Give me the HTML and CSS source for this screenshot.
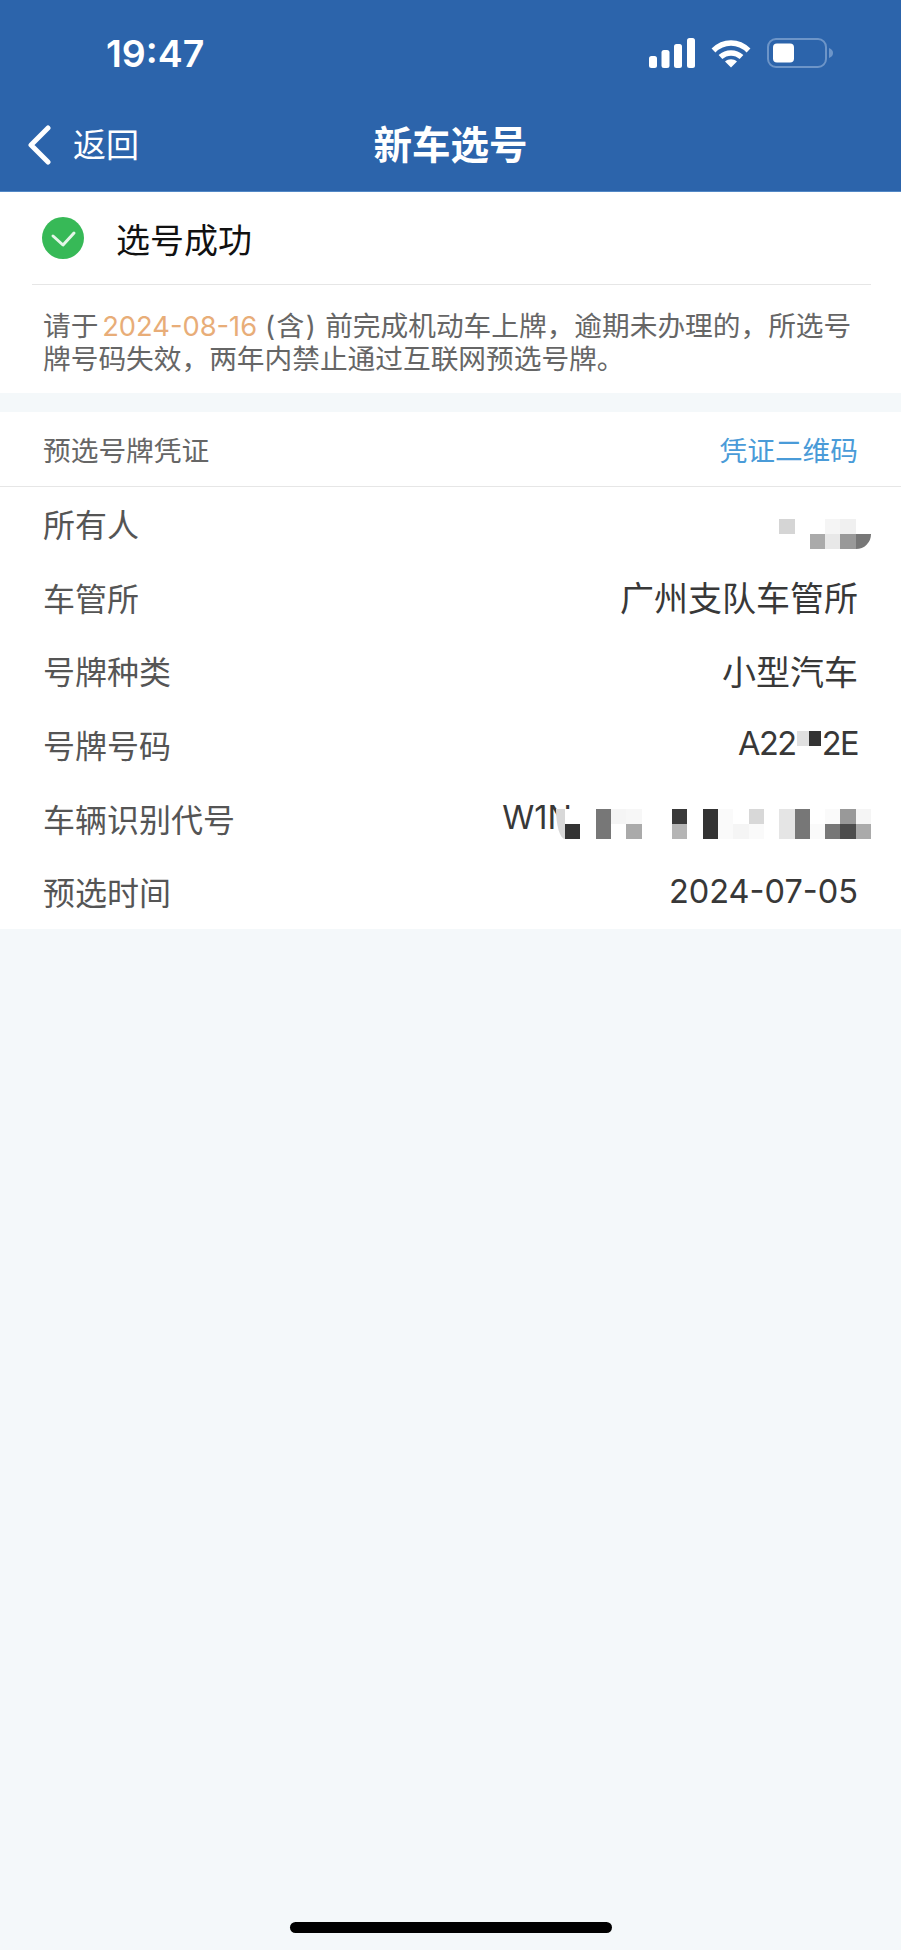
FILE: index.html
```html
<!DOCTYPE html>
<html lang="zh-CN">
<head>
    <meta charset="UTF-8">
    <meta name="viewport" content="width=device-width, initial-scale=1.0">
    <title>新车选号</title>
    <link rel="stylesheet" href="styles.css">
</head>
<body>
    <div class="page">
        <header class="top">
            <div class="status-bar">
                <span class="clock">19:47</span>
                <div class="status-icons">
                    <svg class="signal" width="46" height="30" viewBox="0 0 46 30" fill="#fff">
                        <rect x="0" y="18" width="8" height="12" rx="2.5"/>
                        <rect x="12.5" y="12" width="8" height="18" rx="2.5"/>
                        <rect x="25" y="6" width="8" height="24" rx="2.5"/>
                        <rect x="38" y="0" width="8" height="30" rx="2.5"/>
                    </svg>
                    <svg class="wifi" width="40" height="30" viewBox="0 0 40 30" fill="none" stroke="#fff" stroke-width="5.5">
                        <path d="M2.5 12.5C12.5 2.5 27.5 2.5 37.5 12.5"/>
                        <path d="M9.5 19C15.5 13.5 24.5 13.5 30.500 19"/>
                        <path d="M14 23.500L20 29.500L26 23.500C22.500 20.500 17.500 20.500 14 23.500Z" fill="#fff" stroke="none"/>
                    </svg>
                    <svg class="battery" width="66" height="30" viewBox="0 0 66 30">
                        <rect x="1" y="1" width="58" height="28" rx="8" fill="none" stroke="#6d95c8" stroke-width="2"/>
                        <rect x="6" y="5.500" width="21" height="19" rx="4" fill="#fff"/>
                        <path d="M62 10C65 11 66 13 66 15C66 17 65 19 62 20Z" fill="#6d95c8"/>
                    </svg>
                </div>
            </div>
            <nav class="nav">
                <a class="back">
                    <svg width="24" height="40" viewBox="0 0 24 40" fill="none" stroke="#fff" stroke-width="5" stroke-linecap="round" stroke-linejoin="round">
                        <path d="M21 3L4 20L21 37"/>
                    </svg>
                    <span>返回</span>
                </a>
                <h1>新车选号</h1>
            </nav>
        </header>

        <section class="result">
            <div class="result-head">
                <svg class="ok-icon" width="42" height="42" viewBox="0 0 42 42">
                    <circle cx="21" cy="21" r="21" fill="#37b957"/>
                    <path d="M11 19L21 28L32 16" fill="none" stroke="#e4f6e8" stroke-width="3" stroke-linecap="round" stroke-linejoin="round"/>
                </svg>
                <span>选号成功</span>
            </div>
            <div class="notice">
                <p>请于 <em>2024-08-16</em> <span class="incl">(含)</span> 前完成机动车上牌，逾期未办理的，所选号</p>
                <p>牌号码失效，两年内禁止通过互联网预选号牌。</p>
            </div>
        </section>

        <section class="voucher">
            <div class="voucher-head">
                <span>预选号牌凭证</span>
                <a class="qr-link">凭证二维码</a>
            </div>
            <div class="rows">
                <div class="row">
                    <span class="label">所有人</span>
                    <div class="mosaic mosaic-owner">
                        <i class="s-d5"></i><i></i><i></i><i class="s-f5"></i><i class="s-f0"></i><i></i>
                        <i></i><i></i><i class="s-aa"></i><i class="s-e8"></i><i class="s-99"></i><i class="s-77 corner"></i>
                    </div>
                </div>
                <div class="row">
                    <span class="label">车管所</span>
                    <span class="value">广州支队车管所</span>
                </div>
                <div class="row">
                    <span class="label">号牌种类</span>
                    <span class="value">小型汽车</span>
                </div>
                <div class="row">
                    <span class="label">号牌号码</span>
                    <span class="value latin plate">A22<span class="plate-mask"><i class="s-e0"></i><i class="s-33"></i></span>2E</span>
                </div>
                <div class="row">
                    <span class="label">车辆识别代号</span>
                    <div class="vin">
                        <span class="value latin">W1N</span>
                        <!-- pixelated part of the VIN -->
                        <div class="mosaic mosaic-vin">
                            <i></i><i></i><i class="s-77"></i><i class="s-f5"></i><i class="s-f7"></i><i></i><i></i><i class="s-3a"></i><i></i><i class="s-33"></i>
                            <i class="s-fa"></i><i></i><i class="s-d8"></i><i></i><i class="s-e5"></i><i class="s-77"></i><i></i><i class="s-fa"></i><i class="s-99"></i><i class="s-f5"></i>
                            <i class="s-33"></i><i></i><i class="s-77"></i><i></i><i class="s-aa"></i><i></i><i></i><i class="s-b5"></i><i></i><i class="s-33"></i>
                            <i class="s-fa"></i><i class="s-f5"></i><i class="s-fa"></i><i></i><i class="s-e5"></i><i class="s-77"></i><i class="s-fa"></i><i class="s-77"></i><i class="s-4d"></i><i class="s-aa"></i>
                        </div>
                    </div>
                </div>
                <div class="row">
                    <span class="label">预选时间</span>
                    <span class="value latin">2024-07-05</span>
                </div>
            </div>
        </section>

        <div class="home-bar"></div>
    </div>
</body>
</html>
```

FILE: styles.css
```css
* {
    box-sizing: border-box;
}

body {
    margin: 0;
    background: #f4f8fa;
    font-family: "Inter", "Noto Sans CJK SC", sans-serif;
    color: #333;
}

.page {
    display: flex;
    flex-direction: column;
    height: 1950px;
    overflow: hidden;
}

/* Blue header */
.top {
    background: #2c64ab;
    color: #fff;
    height: 192px;
    border-bottom: 1px solid #5288c6;
}

.status-bar {
    display: flex;
    justify-content: space-between;
    align-items: flex-start;
    height: 104px;
    padding: 34px 68px 0 106px;
}

.clock {
    font-size: 37.500px;
    font-weight: 600;
    line-height: 40px;
}

.status-icons {
    display: flex;
    gap: 16px;
    padding-top: 4px;
}

.nav {
    display: flex;
    align-items: center;
    justify-content: center;
    height: 84px;
    position: relative;
}

.back {
    position: absolute;
    left: 27px;
    top: 21px;
    display: flex;
    align-items: center;
    gap: 22px;
    font-size: 33px;
    line-height: 40px;
}

.nav h1 {
    margin: 0 0 8px;
    font-size: 38.500px;
    font-weight: 700;
}

/* Result card */
.result {
    background: #fff;
    height: 201px;
}

.result-head {
    display: flex;
    align-items: center;
    gap: 32px;
    height: 93px;
    margin: 0 30px 0 32px;
    padding-left: 10px;
    border-bottom: 1px solid #e6e6e6;
    font-size: 34px;
    color: #111;
}

.notice {
    padding: 25px 43px 0;
    font-size: 27.700px;
    line-height: 33px;
    color: #666;
}

.notice p {
    margin: 0;
    white-space: nowrap;
}

.notice em {
    font-style: normal;
    font-size: 27.300px;
    margin-left: -4px;
    color: #e8ad78;
}

.incl {
    letter-spacing: 1.500px;
}

/* Voucher card */
.voucher {
    background: #fff;
    margin-top: 19px;
}

.voucher-head {
    display: flex;
    justify-content: space-between;
    align-items: center;
    height: 75px;
    padding: 0 43px;
    border-bottom: 1px solid #e6e6e6;
    font-size: 27.700px;
    color: #666;
}

.qr-link {
    color: #4a9bd8;
}

.rows {
    margin-top: -1px;
    padding-bottom: 0.800px;
}

.row {
    display: flex;
    justify-content: space-between;
    align-items: center;
    height: 73.700px;
    padding: 0 43px;
}

.label {
    font-size: 32px;
    color: #555;
}

.value {
    font-size: 34px;
    color: #383838;
}

.value.latin {
    font-size: 32.500px;
}

.value.plate {
    letter-spacing: -1.500px;
}

.mosaic {
    display: grid;
    grid-auto-rows: 15px;
    background: #fff;
}

.mosaic-owner {
    grid-template-columns: repeat(6, 15.300px);
    margin: 23px -13px 0 0;
}

.mosaic-vin {
    position: relative;
    grid-template-columns: repeat(20, 15.300px);
    margin: 12px -13px 0 -7px;
}

/* the smeared edge where the blur starts */
.mosaic-vin::before {
    content: "";
    position: absolute;
    left: -9px;
    top: 0;
    width: 9px;
    height: 30px;
    background: #d8d8d8;
    border-bottom-left-radius: 100%;
}

.vin {
    display: flex;
    align-items: center;
}

.plate-mask {
    display: inline-flex;
    vertical-align: 9px;
    margin: 0 1px;
}

.plate-mask i {
    width: 12px;
    height: 15px;
}

.corner {
    border-bottom-right-radius: 100%;
}

.s-33 { background: #333; }
.s-3a { background: #3a3a3a; }
.s-4d { background: #4d4d4d; }
.s-77 { background: #777; }
.s-99 { background: #999; }
.s-aa { background: #aaa; }
.s-b5 { background: #b5b5b5; }
.s-d5 { background: #d5d5d5; }
.s-d8 { background: #d8d8d8; }
.s-e0 { background: #e0e0e0; }
.s-e5 { background: #e5e5e5; }
.s-e8 { background: #e8e8e8; }
.s-f0 { background: #f0f0f0; }
.s-f5 { background: #f5f5f5; }
.s-f7 { background: #f7f7f7; }
.s-fa { background: #fafafa; }

.home-bar {
    width: 322px;
    height: 11px;
    margin: auto auto 17px;
    border-radius: 6px;
    background: #000;
}
```
